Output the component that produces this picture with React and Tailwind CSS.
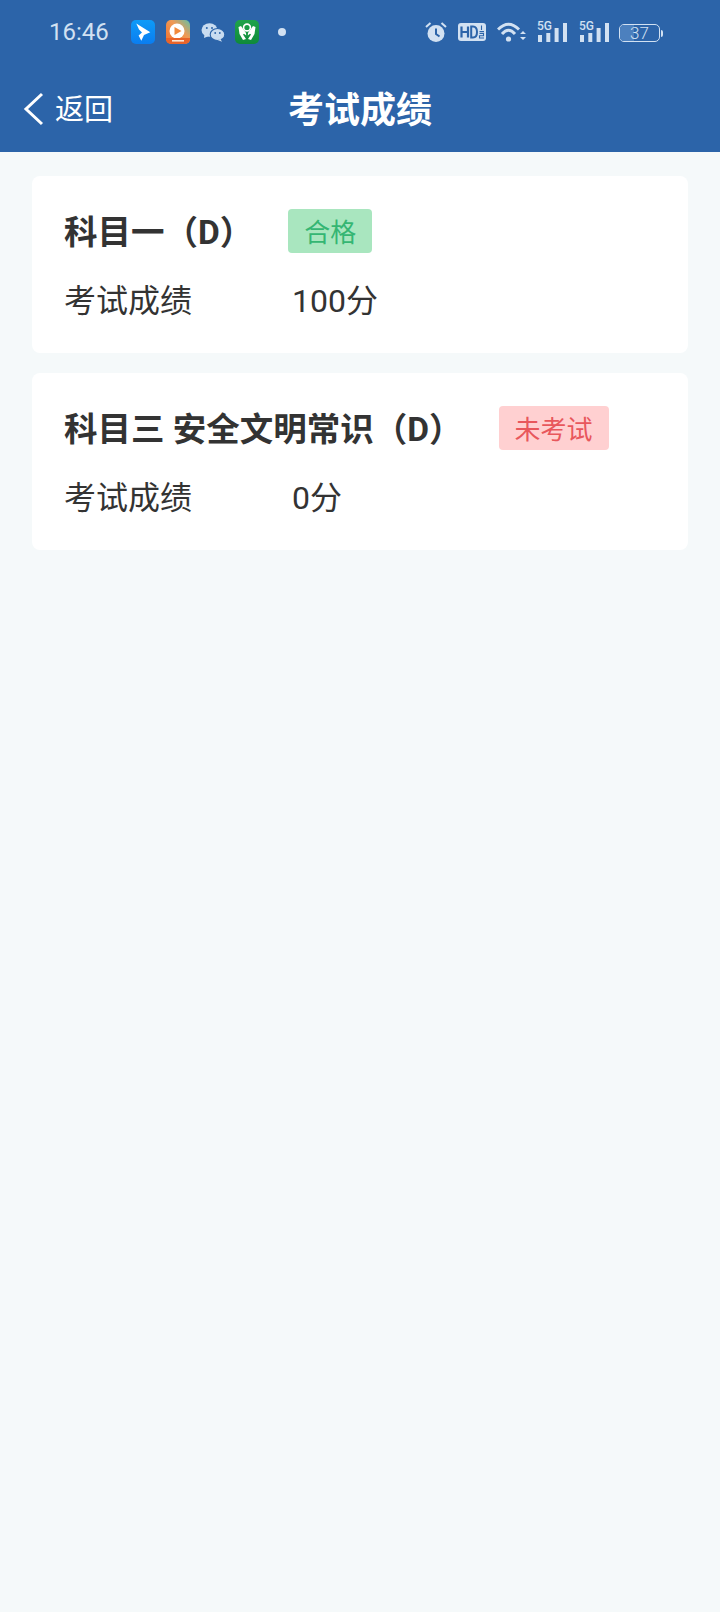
import React from 'react'

const FONT = 'font-["Roboto","Noto_Sans_CJK_SC",sans-serif]'

const RESULTS = [
  { name: '科目一（D）', status: '合格', score: '100分', passed: true, gap: 'ml-[35px]' },
  { name: '科目三 安全文明常识（D）', status: '未考试', score: '0分', passed: false, gap: 'ml-[36px]' },
]

function AppIcons() {
  return (
    <div className="flex items-center ml-[22px]">
      {/* blue app */}
      <svg width="24" height="24" viewBox="0 0 24 24">
        <defs>
          <linearGradient id="blueApp" x1="0" y1="0" x2="0" y2="1">
            <stop offset="0" stopColor="#0d9bf8" />
            <stop offset="1" stopColor="#0a7df0" />
          </linearGradient>
        </defs>
        <rect width="24" height="24" rx="5" fill="url(#blueApp)" />
        <path d="M5.3 3.5 L19.3 12.2 L13 15 L10.3 20.8 L7.6 15.5 L11 12.5 L8 9.5 Z" fill="#fff" />
      </svg>
      {/* orange video app */}
      <svg className="ml-[11px]" width="24" height="24" viewBox="0 0 24 24">
        <defs>
          <linearGradient id="orangeApp" x1="0" y1="1" x2="1" y2="0">
            <stop offset="0" stopColor="#f0702e" />
            <stop offset="0.6" stopColor="#ef9a55" />
            <stop offset="1" stopColor="#5fc0a8" />
          </linearGradient>
        </defs>
        <rect width="24" height="24" rx="5" fill="url(#orangeApp)" />
        <circle cx="11" cy="11" r="7.5" fill="#fff" />
        <path d="M8.5 7 L15.5 11 L8.5 15 Z" fill="#f28a3c" />
        <path d="M0 18 H24 V19 A5 5 0 0 1 19 24 H5 A5 5 0 0 1 0 19 Z" fill="#e8642a" />
        <rect x="6" y="20" width="12" height="1.6" fill="#fbe3d0" />
      </svg>
      {/* wechat */}
      <svg className="ml-[11px]" width="24" height="19" viewBox="0 0 24 19">
        <ellipse cx="8.5" cy="7" rx="8" ry="6.8" fill="#c9dcf0" />
        <path d="M3.5 11 L3 15 L8 13 Z" fill="#c9dcf0" />
        <ellipse cx="16.5" cy="11.5" rx="7.3" ry="6" fill="#c9dcf0" stroke="#2c64a9" strokeWidth="1.1" />
        <path d="M19.5 16 L21 18.8 L16.5 17 Z" fill="#c9dcf0" />
        <circle cx="5.8" cy="5" r="1" fill="#2c64a9" />
        <circle cx="11" cy="5" r="1" fill="#2c64a9" />
        <circle cx="14.2" cy="10" r="0.9" fill="#2c64a9" />
        <circle cx="18.8" cy="10" r="0.9" fill="#2c64a9" />
      </svg>
      {/* green bank app */}
      <svg className="ml-[10px]" width="24" height="24" viewBox="0 0 24 24">
        <defs>
          <linearGradient id="greenApp" x1="0" y1="0" x2="0" y2="1">
            <stop offset="0" stopColor="#1fa34a" />
            <stop offset="1" stopColor="#0f8a3a" />
          </linearGradient>
        </defs>
        <rect width="24" height="24" rx="5" fill="url(#greenApp)" />
        <circle cx="12" cy="7.5" r="3.4" fill="none" stroke="#fff" strokeWidth="1.6" />
        <path d="M3.5 7 L6 6 L11 13 L11.2 15.5 L9 13.8 L8 14.5 L11 19 L8 20 L4.5 14 Z" fill="#fff" />
        <path d="M20.5 7 L18 6 L13 13 L12.8 15.5 L15 13.8 L16 14.5 L13 19 L16 20 L19.5 14 Z" fill="#fff" />
      </svg>
      <span className="ml-[19px] w-[8px] h-[8px] rounded-full bg-[#d2e1f2]" />
    </div>
  )
}

function Signal() {
  return (
    <div className="relative w-[31px] h-[20px]">
      <span className="absolute left-0 top-0 text-[12px] leading-[9px] font-medium text-[#d2e1f2]">5G</span>
      <svg className="absolute left-0 top-0" width="31" height="20" viewBox="0 0 31 20">
        <rect x="1" y="13" width="4" height="7" fill="#d2e1f2" />
        <rect x="9.3" y="11" width="4" height="9" fill="#d2e1f2" />
        <rect x="17.6" y="6" width="4" height="14" fill="#d2e1f2" />
        <rect x="26" y="1" width="4" height="19" fill="#d2e1f2" />
      </svg>
    </div>
  )
}

function SystemIcons() {
  return (
    <div className="flex items-center ml-auto mr-[57px]">
      {/* alarm */}
      <svg width="22" height="20" viewBox="0 0 22 20">
        <circle cx="11" cy="11.5" r="8.5" fill="#d2e1f2" />
        <path d="M11 6.5 V12 L14.5 14.5" fill="none" stroke="#2c64a9" strokeWidth="2" />
        <path d="M1 5 L5.5 1 M21 5 L16.5 1" stroke="#d2e1f2" strokeWidth="2" />
      </svg>
      {/* HD */}
      <svg className="ml-[11px]" width="28" height="18" viewBox="0 0 28 18">
        <rect width="28" height="18" rx="3" fill="#d2e1f2" />
        <path d="M3.5 3.5 V14.5 M10 3.5 V14.5 M3.5 9 H10" stroke="#2c64a9" strokeWidth="2.2" fill="none" />
        <path d="M13.2 3.5 V14.5 H15 Q19 14.5 19 9 Q19 3.5 15 3.5 Z" stroke="#2c64a9" strokeWidth="2" fill="none" />
        <path d="M23.5 2.5 V7 M21.5 8.6 H26 M21.5 10.5 H25.5 V12.7 H21.5 V15 H26" stroke="#2c64a9" strokeWidth="1.1" fill="none" />
      </svg>
      {/* wifi */}
      <svg className="ml-[11px]" width="30" height="20" viewBox="0 0 30 20">
        <path d="M1 7.5 Q11.5 -3 22 7.5" fill="none" stroke="#d2e1f2" strokeWidth="3" />
        <path d="M5 12 Q11.5 4.5 18 12" fill="none" stroke="#d2e1f2" strokeWidth="3" />
        <circle cx="11.5" cy="17" r="2.6" fill="#d2e1f2" />
        <path d="M23 12 L26 9 L29 12 Z M23 15 L26 18 L29 15 Z" fill="#d2e1f2" />
      </svg>
      <div className="ml-[10px]"><Signal /></div>
      <div className="ml-[11px]"><Signal /></div>
      {/* battery */}
      <div className="ml-[9px] flex items-center translate-y-[1px]">
        <div className="relative w-[41px] h-[18px] rounded-[5px] border border-[#d2e1f2] overflow-hidden flex items-center justify-center">
          <span className="absolute left-0 top-0 bottom-0 w-[14px] bg-[#4c80be]" />
          <span className="relative text-[17px] leading-none font-light text-[#d2e1f2]">37</span>
        </div>
        <span className="ml-[1px] w-[2px] h-[7px] rounded-r bg-[#d2e1f2]" />
      </div>
    </div>
  )
}

function ResultCard({ item }) {
  return (
    <div className="bg-white rounded-[8px] h-[177px] pt-[33px] pl-[32px]">
      <div className="flex items-center h-[44px]">
        <h3 className="pt-[4px] text-[33.5px] leading-[44px] font-bold text-[#333] whitespace-nowrap">{item.name}</h3>
        <span
          className={`${item.gap} rounded-[4px] h-[44px] px-[16px] text-[26px] leading-[48px] ${
            item.passed ? 'bg-[#a9e6bf] text-[#35b673]' : 'bg-[#ffd0d1] text-[#e8575c]'
          }`}
        >
          {item.status}
        </span>
      </div>
      <div className="flex items-center mt-[26px] text-[32px] leading-[44px] text-[#333]">
        <span className="w-[228px]">考试成绩</span>
        <span>{item.score}</span>
      </div>
    </div>
  )
}

export default function App() {
  return (
    <div className={`${FONT} w-[720px] h-[1612px] bg-[#f5f9fa] overflow-hidden`}>
      <div className="bg-[#2c64a9] h-[152px]">
        {/* status bar */}
        <div className="flex items-center h-[64px] pl-[49px]">
          <span className="text-[24px] leading-none text-[#d2e1f2]">16:46</span>
          <AppIcons />
          <SystemIcons />
        </div>
        {/* nav */}
        <div className="relative flex items-center justify-center h-[88px]">
          <div className="absolute left-[23px] top-[27px] flex items-center text-white">
            <svg width="22" height="34" viewBox="0 0 22 34">
              <path d="M19 2 L3 17 L19 32" fill="none" stroke="#fff" strokeWidth="3" />
            </svg>
            <span className="ml-[10px] pt-[2px] text-[29px] leading-[34px]">返回</span>
          </div>
          <h1 className="pt-[6px] text-[36px] font-bold text-white leading-[44px]">考试成绩</h1>
        </div>
      </div>

      <div className="px-[32px] pt-[24px] flex flex-col gap-[20px]">
        {RESULTS.map(item => (
          <ResultCard key={item.name} item={item} />
        ))}
      </div>
    </div>
  )
}
